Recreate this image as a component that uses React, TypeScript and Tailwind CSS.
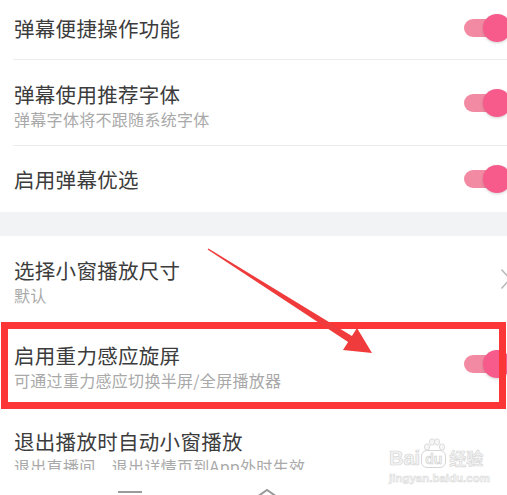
import React from "react";

function Toggle() {
  return (
    <div className="relative w-[47px] h-[28px] mr-[-4px] shrink-0">
      <div className="absolute left-0 top-[5px] w-[40px] h-[18px] rounded-full bg-[#f38aa3]" />
      <div className="absolute right-0 top-0 w-[28px] h-[28px] rounded-full bg-[#f65b8b] shadow-[0_1px_3px_rgba(0,0,0,0.18)]" />
    </div>
  );
}

function Chevron() {
  return (
    <svg width="12" height="22" viewBox="0 0 12 22" className="mr-[-5px] shrink-0">
      <path d="M1.5 1.5 L10 11 L1.5 20.5" fill="none" stroke="#b9b9b9" strokeWidth="1.6" />
    </svg>
  );
}

function Divider() {
  return <div className="ml-[13px] h-px bg-[#ececec]" />;
}

function Title({ children }: { children: React.ReactNode }) {
  return <div className="text-[20.5px] leading-[26px] text-[#3c3c3c] tracking-[0.3px]">{children}</div>;
}

function Sub({ children }: { children: React.ReactNode }) {
  return <div className="text-[16px] leading-[24px] text-[#a9a9a9] tracking-[0.3px]">{children}</div>;
}

export default function App() {
  return (
    <div className="relative w-[507px] h-[495px] overflow-hidden bg-white font-['Noto_Sans_CJK_SC','Noto_Sans',sans-serif]">
      <div className="h-[59px] flex items-center justify-between pl-[14px] pb-[3px]">
        <Title>弹幕便捷操作功能</Title>
        <Toggle />
      </div>
      <Divider />
      <div className="h-[85px] flex items-center justify-between pl-[14px]">
        <div className="mt-[6px]">
          <Title>弹幕使用推荐字体</Title>
          <Sub>弹幕字体将不跟随系统字体</Sub>
        </div>
        <Toggle />
      </div>
      <Divider />
      <div className="h-[66px] flex items-center justify-between pl-[14px]">
        <Title>启用弹幕优选</Title>
        <Toggle />
      </div>

      <div className="h-[24px] bg-[#f2f3f5]" />

      <div className="h-[85px] flex items-center justify-between pl-[14px]">
        <div className="mt-[6px]">
          <Title>选择小窗播放尺寸</Title>
          <Sub>默认</Sub>
        </div>
        <Chevron />
      </div>
      <div className="h-[86px] flex items-center justify-between pl-[14px]">
        <div className="mt-[6px]">
          <Title>启用重力感应旋屏</Title>
          <Sub>可通过重力感应切换半屏/全屏播放器</Sub>
        </div>
        <Toggle />
      </div>
      <div className="h-[63px] overflow-hidden pl-[14px] pt-[21px]">
        <Title>退出播放时自动小窗播放</Title>
        <Sub>退出直播间、退出详情页到App外时生效</Sub>
      </div>

      <div className="h-[25px] flex items-start bg-white">
        <div className="ml-[118px] mt-[21px] w-[24px] h-[2px] bg-[#9a9a9a]" />
        <svg width="28" height="12" viewBox="0 0 28 12" className="ml-[111px] mt-[18px]">
          <path d="M1 11 L14 2 L27 11" fill="none" stroke="#9a9a9a" strokeWidth="2" />
        </svg>
      </div>

      {/* watermark */}
      <div className="absolute left-[389px] top-[438px] flex flex-col items-start select-none">
        <div className="flex items-end gap-[1px]">
          <span className="font-['Liberation_Sans',sans-serif] font-bold text-[20px] leading-[20px] text-[#f4f4f4] [-webkit-text-stroke:0.7px_#d6d6d6]">Bai</span>
          <div className="relative flex flex-col items-center">
            <svg width="24" height="14" viewBox="0 0 24 14" className="mb-[-2px]">
              <ellipse cx="5" cy="9" rx="2.6" ry="3.2" fill="#f6f6f6" stroke="#d6d6d6" strokeWidth="0.8" />
              <ellipse cx="10" cy="4" rx="2.6" ry="3.2" fill="#f6f6f6" stroke="#d6d6d6" strokeWidth="0.8" />
              <ellipse cx="15" cy="4" rx="2.6" ry="3.2" fill="#f6f6f6" stroke="#d6d6d6" strokeWidth="0.8" />
              <ellipse cx="20" cy="9" rx="2.6" ry="3.2" fill="#f6f6f6" stroke="#d6d6d6" strokeWidth="0.8" />
            </svg>
            <span className="px-[3px] rounded-[6px] border border-[#d6d6d6] font-['Liberation_Sans',sans-serif] font-bold text-[14px] leading-[16px] text-[#f4f4f4] [-webkit-text-stroke:0.6px_#d0d0d0]">du</span>
          </div>
          <span className="ml-[2px] text-[17px] leading-[20px] font-bold text-[#f4f4f4] [-webkit-text-stroke:0.6px_#d6d6d6]">经验</span>
        </div>
        <span className="mt-[4px] font-['Liberation_Sans',sans-serif] font-bold text-[11.5px] leading-[12px] text-[#f4f4f4] [-webkit-text-stroke:0.5px_#d8d8d8]">jingyan.baidu.com</span>
      </div>

      {/* annotation: red box + arrow */}
      <div className="absolute left-[1px] top-[322px] w-[505px] h-[87px] border-[7px] border-[#fc3636] pointer-events-none" />
      <svg className="absolute left-0 top-0 pointer-events-none" width="507" height="495" viewBox="0 0 507 495">
        <polygon
          points="208.4,248.4 351.9,336 357,328 372,353 343,350 348.1,342 207.6,249.6"
          fill="#ef3b3b"
        />
      </svg>
    </div>
  );
}
